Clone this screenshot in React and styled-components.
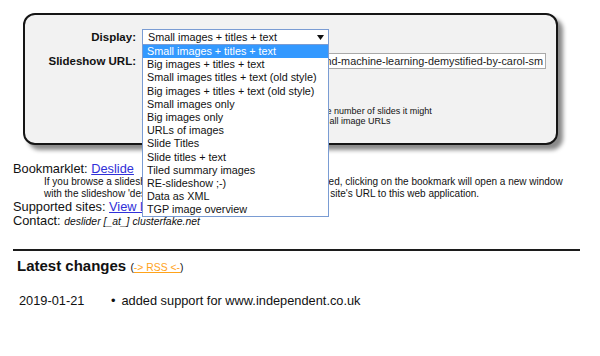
import React from 'react';
import styled, { createGlobalStyle } from 'styled-components';

const GlobalStyle = createGlobalStyle`
  body {
    margin: 8px;
    background: #fff;
    color: #111;
    font-family: "Liberation Sans", Arial, sans-serif;
  }
`;

const displayOptions = [
  'Small images + titles + text',
  'Big images + titles + text',
  'Small images titles + text (old style)',
  'Big images + titles + text (old style)',
  'Small images only',
  'Big images only',
  'URLs of images',
  'Slide Titles',
  'Slide titles + text',
  'Tiled summary images',
  'RE-slideshow ;-)',
  'Data as XML',
  'TGP image overview',
];

const App = () => {
  return (
    <Page>
      <GlobalStyle />
      <Panel>
        <FormGrid>
          <Label>Display:</Label>
          <SelectWrap>
            <SelectBox>
              <span>{displayOptions[0]}</span>
              <svg width="7" height="5" viewBox="0 0 7 5">
                <path d="M0 0 L7 0 L3.5 5 Z" fill="#111" />
              </svg>
            </SelectBox>
            <Dropdown>
              {displayOptions.map((opt, i) => (
                <Option key={opt} $active={i === 0}>{opt}</Option>
              ))}
            </Dropdown>
          </SelectWrap>

          <Label>Slideshow URL:</Label>
          <UrlField>
            <span>https://www.slideshare.net/carologic/ai-and-machine-learning-demystified-by-carol-sm</span>
          </UrlField>

          <span />
          <Note>
            Please note: Deslider cannot always predict the number of slides it might<br />
            take to show them all, so it may even fail to list all image URLs
          </Note>
        </FormGrid>
      </Panel>

      <Info>
        <InfoLine>
          Bookmarklet: <Link href="#">Deslide</Link>
        </InfoLine>
        <Hint>
          If you browse a slideshow on any supported site while it is installed, clicking on the bookmark will open a new window<br />
          with the slideshow 'deslided' by passing in the current slideshow site's URL to this web application.
        </Hint>
        <InfoLine>
          Supported sites: <Link href="#">View list</Link>
        </InfoLine>
        <InfoLine>
          Contact: <Mail>deslider [_at_] clusterfake.net</Mail>
        </InfoLine>
      </Info>

      <Rule />

      <Heading>
        Latest changes <Feed>(<FeedLink href="#">-&gt; RSS &lt;-</FeedLink>)</Feed>
      </Heading>

      <Changes>
        <ChangeDate>2019-01-21</ChangeDate>
        <ChangeList>
          <Entry>added support for www.independent.co.uk</Entry>
        </ChangeList>
      </Changes>
    </Page>
  );
};

const Page = styled.div`
  width: 584px;
`;

const Panel = styled.section`
  margin: 5px 34px 0 15px;
  border: 2px solid #151515;
  border-radius: 12px;
  background: #f2f2f2;
  box-shadow: 5px 5px 4px #8a8a8a;
  padding: 14px 12px 17px 0;
`;

const FormGrid = styled.div`
  display: grid;
  grid-template-columns: 111px 1fr;
  column-gap: 6px;
  row-gap: 8px;
  align-items: center;
`;

const Label = styled.label`
  text-align: right;
  font-size: 11.5px;
  font-weight: 700;
  color: #111;
`;

const SelectWrap = styled.div`
  position: relative;
  width: 187px;
  z-index: 5;
`;

const SelectBox = styled.div`
  box-sizing: border-box;
  height: 16px;
  display: flex;
  align-items: center;
  justify-content: space-between;
  padding: 0 4px 0 5px;
  background: #fff;
  border: 1px solid #7a9cd3;
  font-size: 10.8px;
  color: #111;
  line-height: 14px;
`;

const Dropdown = styled.ul`
  position: absolute;
  top: 100%;
  left: 0;
  right: 0;
  margin: 0;
  padding: 0;
  list-style: none;
  background: #fff;
  border: 1px solid #7a9cd3;
  border-top: none;
`;

const Option = styled.li`
  height: 13.2px;
  line-height: 13px;
  padding-left: 4px;
  font-size: 10.8px;
  white-space: nowrap;
  overflow: hidden;
  color: ${(p) => (p.$active ? '#fff' : '#111')};
  background: ${(p) => (p.$active ? '#3399ff' : 'transparent')};
`;

const UrlField = styled.div`
  box-sizing: border-box;
  height: 16px;
  width: 404px;
  display: flex;
  justify-content: flex-end;
  align-items: center;
  overflow: hidden;
  white-space: nowrap;
  background: #fff;
  border: 1px solid #a9a9a9;
  border-left-color: #7a1f1f;
  padding-right: 2px;
  font-size: 10.85px;
  color: #222;
`;

const Note = styled.p`
  margin: 29px 0 0;
  font-size: 9px;
  line-height: 10px;
  color: #111;
`;

const Info = styled.div`
  margin-top: 17px;
  margin-left: 5px;
`;

const InfoLine = styled.div`
  font-size: 12.8px;
  line-height: 14px;
  color: #111;
`;

const Hint = styled.p`
  margin: 0 0 0 31px;
  font-size: 10px;
  line-height: 12px;
  color: #111;
`;

const Link = styled.a`
  color: #3030d8;
  text-decoration: underline;
`;

const Mail = styled.em`
  font-size: 10.4px;
`;

const Rule = styled.hr`
  margin: 20px 12px 0 5px;
  border: none;
  height: 2px;
  background: #1c1c1c;
`;

const Heading = styled.h3`
  margin: 6px 0 0 9px;
  font-size: 15px;
  line-height: 18px;
  font-weight: 700;
  color: #111;
`;

const Feed = styled.span`
  font-size: 10.4px;
  font-weight: 400;
  color: #111;
`;

const FeedLink = styled.a`
  color: #ffa31a;
  text-decoration: underline;
`;

const Changes = styled.div`
  display: grid;
  grid-template-columns: 80px 1fr;
  margin: 16px 0 0 11px;
  font-size: 12.8px;
  line-height: 16px;
  color: #111;
`;

const ChangeDate = styled.div``;

const ChangeList = styled.ul`
  margin: 0;
  padding: 0 0 0 12px;
  list-style: none;
`;

const Entry = styled.li`
  display: flex;
  gap: 6px;

  &::before {
    content: "•";
  }
`;

export default App;
